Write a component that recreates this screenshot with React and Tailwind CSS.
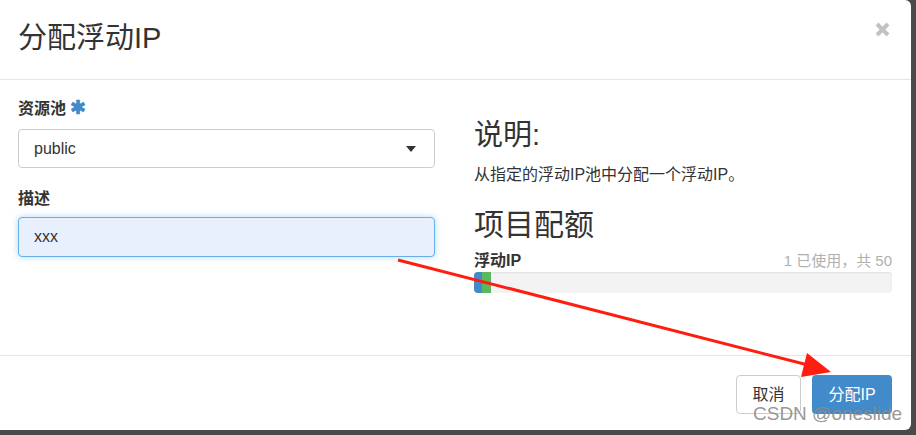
import React from 'react';

const font = { fontFamily: '"Liberation Sans", "Noto Sans CJK SC", sans-serif' };

// 红色标注箭头（截图上的手绘标记）
function Arrow() {
  return (
    <svg className="absolute left-0 top-0 pointer-events-none" width="916" height="435">
      <line x1="398" y1="260" x2="812" y2="366" stroke="#ff1d10" strokeWidth="3" />
      <polygon points="831,372 807,353 801,377" fill="#ff1d10" />
    </svg>
  );
}

function QuotaBar({ used, total }) {
  return (
    <div className="mt-[6px]">
      <div className="flex justify-between items-end leading-[22px]">
        <span className="text-[16px] font-bold text-[#333]">浮动IP</span>
        <span className="text-[15px] text-[#b0b0b0]">{used} 已使用，共 {total}</span>
      </div>
      <div className="h-[21px] rounded-[4px] bg-[#f3f3f3] flex overflow-hidden shadow-[inset_0_1px_2px_rgba(0,0,0,0.08)]">
        <div className="w-[8px] bg-[#428bca]" />
        <div className="w-[9px] bg-[#5cb85c]" />
      </div>
    </div>
  );
}

export default function App() {
  return (
    <div className="relative w-[916px] h-[435px] bg-[#4a4a4a] overflow-hidden" style={font}>
      <div className="w-[911px] h-[430px] bg-white rounded-r-[6px] flex flex-col text-[#333]">
        <div className="h-[80px] border-b border-[#e5e5e5] pl-[18px] pr-[21px] pt-[20px] flex justify-between">
          <h4 className="text-[29px] leading-[36px] font-normal">分配浮动IP</h4>
          <svg width="15" height="15" viewBox="0 0 15 15" className="mt-[2px]">
            <path d="M2 2 L13 13 M13 2 L2 13" stroke="#c2c2c2" strokeWidth="4" />
          </svg>
        </div>

        <div className="h-[276px] border-b border-[#e5e5e5] flex pl-[18px] pr-[19px] pt-[17px] gap-[39px]">
          <div className="w-[417px]">
            <label className="block text-[16px] leading-[22px] font-bold">
              资源池 <span className="text-[#428bca] text-[19px]">✱</span>
            </label>
            <div className="mt-[9px] h-[39px] border border-[#ccc] rounded-[4px] flex items-center justify-between pl-[15px] pr-[18px] text-[16px]">
              <span>public</span>
              <span className="w-0 h-0 border-l-[5px] border-r-[5px] border-t-[6px] border-l-transparent border-r-transparent border-t-[#333]" />
            </div>
            <label className="block mt-[20px] text-[16px] leading-[22px] font-bold">描述</label>
            <div className="mt-[7px] h-[40px] border border-[#66afe9] rounded-[4px] bg-[#e8f0fe] flex items-center pl-[15px] text-[16px] shadow-[0_0_6px_rgba(102,175,233,0.5)]">
              xxx
            </div>
          </div>

          <div className="w-[418px] pt-[20px]">
            <h3 className="text-[29px] leading-[36px]">说明:</h3>
            <p className="mt-[11px] text-[16px] leading-[22px]">从指定的浮动IP池中分配一个浮动IP。</p>
            <h3 className="mt-[20px] text-[30px] leading-[38px]">项目配额</h3>
            <QuotaBar used={1} total={50} />
          </div>
        </div>

        <div className="flex justify-end gap-[11px] pr-[19px] pt-[19px]">
          <button className="h-[39px] w-[65px] border border-[#ccc] rounded-[4px] bg-white text-[16px] text-[#333]">取消</button>
          <button className="h-[39px] w-[80px] rounded-[4px] bg-[#428bca] text-[16px] text-white">分配IP</button>
        </div>
      </div>

      <Arrow />
      <div className="absolute left-[753px] top-[401px] text-[19px] leading-[26px] text-[#8a8a8a]/90">CSDN @oneslide</div>
    </div>
  );
}
